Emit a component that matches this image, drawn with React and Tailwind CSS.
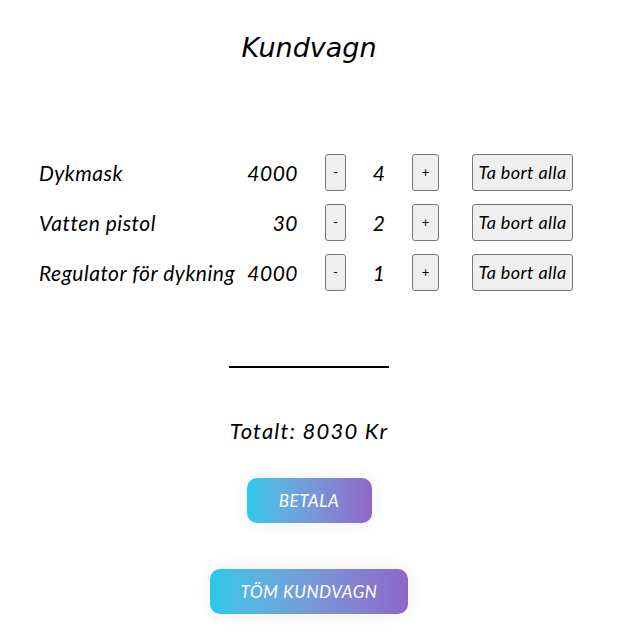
import React, { useState } from 'react';

const initialItems = [
  { id: 1, name: 'Dykmask', price: 4000, qty: 4 },
  { id: 2, name: 'Vatten pistol', price: 30, qty: 2 },
  { id: 3, name: 'Regulator för dykning', price: 4000, qty: 1 },
];

const body = { fontFamily: 'Lato, "Open Sans", sans-serif' };

const Cart = () => {
  const [items] = useState(initialItems);

  return (
    <div className="min-h-screen w-full bg-white flex flex-col items-center pr-[3px] italic text-black" style={body}>
      <h1
        className="mt-[28px] text-[27px] leading-[40px] font-normal"
        style={{ fontFamily: '"DejaVu Sans", Verdana, sans-serif' }}
      >
        Kundvagn
      </h1>

      <div className="mt-[86px] w-full pl-[39px] flex flex-col gap-[13px]">
        {items.map((item) => (
          <div key={item.id} className="flex items-center h-[37px] text-[21px] tracking-[0.5px]">
            <span className="w-[200px] whitespace-nowrap">{item.name}</span>
            <span className="w-[59px] text-right">{item.price}</span>
            <button className="ml-[27px] w-[21px] h-[37px] bg-[#efefef] border border-[#767676] rounded-[3px] text-[13px] not-italic tracking-normal">
              -
            </button>
            <span className="w-[66px] text-center">{item.qty}</span>
            <button className="w-[27px] h-[37px] bg-[#efefef] border border-[#767676] rounded-[3px] text-[13px] not-italic tracking-normal">
              +
            </button>
            <button className="ml-[33px] w-[101px] h-[37px] bg-[#efefef] border border-[#767676] rounded-[3px] text-[18px] tracking-[0.4px] italic">
              Ta bort alla
            </button>
          </div>
        ))}
      </div>

      <div className="mt-[75px] w-[160px] h-[2px] bg-black" />

      <p className="mt-[48px] text-[22px] leading-[30px] tracking-[1.2px]">Totalt: 8030 Kr</p>

      <button className="mt-[32px] w-[125px] h-[45px] rounded-[10px] bg-gradient-to-r from-[#26c9ea] to-[#8d67c8] text-white text-[17px] tracking-[0.6px] italic uppercase shadow-[0_0_18px_rgba(0,0,0,0.07)]">
        Betala
      </button>

      <button className="mt-[46px] w-[198px] h-[45px] rounded-[10px] bg-gradient-to-r from-[#26c9ea] to-[#8d67c8] text-white text-[17px] tracking-[0.6px] italic uppercase shadow-[0_0_18px_rgba(0,0,0,0.07)]">
        Töm kundvagn
      </button>
    </div>
  );
};

export default function App() {
  return <Cart />;
}
